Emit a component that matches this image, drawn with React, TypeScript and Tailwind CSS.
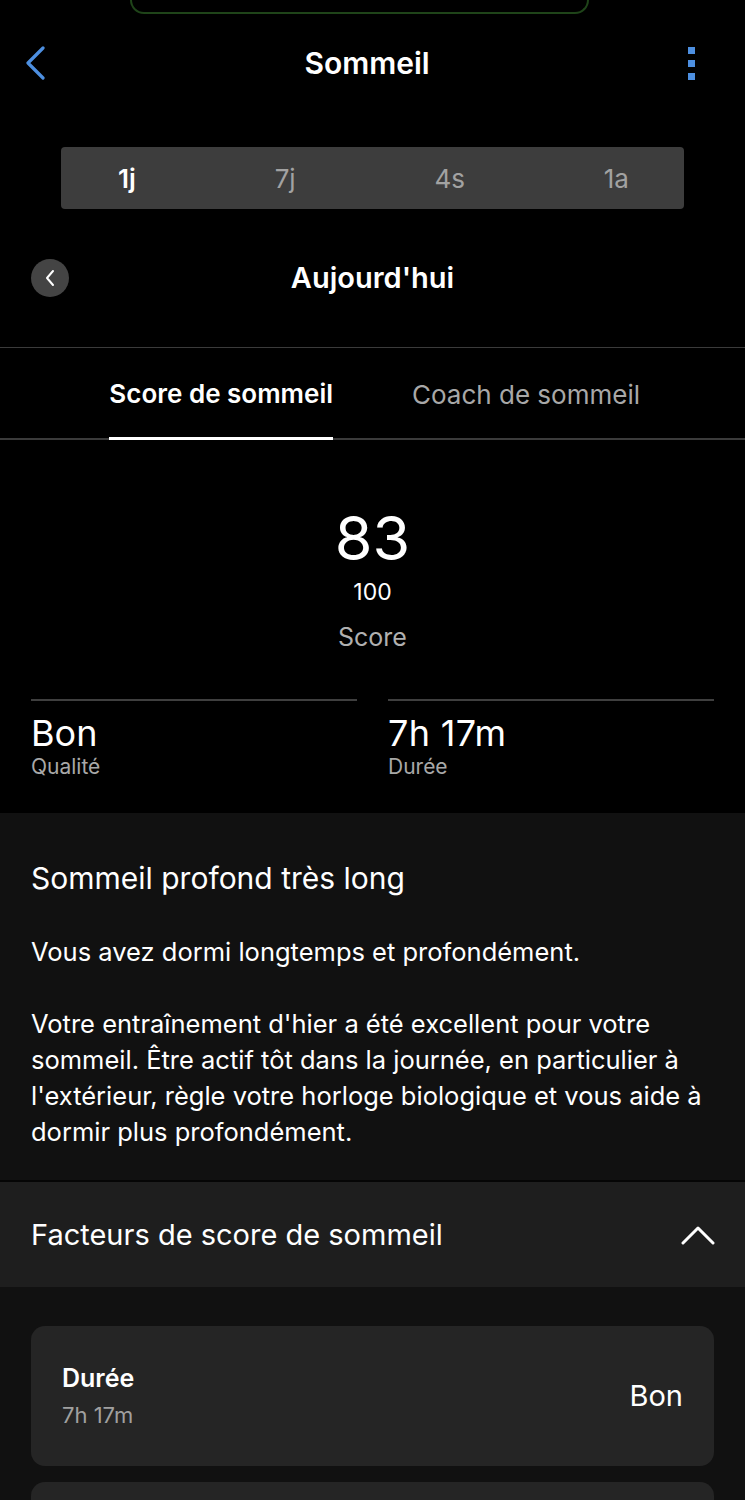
import React from 'react';

const font = { fontFamily: 'Inter, Roboto, "Noto Sans", sans-serif' };

const App: React.FC = () => {
  return (
    <div className="min-h-[1500px] w-[745px] bg-black text-white" style={font}>
      {/* top notch outline */}
      <div className="h-[14px] ml-[130px] w-[459px] border-x-2 border-b-2 border-[#1f4419] rounded-b-[22px]" />

      {/* header */}
      <div className="flex items-center justify-between h-[98px] pl-[24px] pr-[50px]">
        <svg width="22" height="34" viewBox="0 0 22 34" fill="none">
          <path d="M19 2 L4 17 L19 32" stroke="#4d8fe0" strokeWidth="3.2" strokeLinecap="round" strokeLinejoin="round" />
        </svg>
        <h1 className="text-[30px] font-semibold">Sommeil</h1>
        <div className="flex flex-col gap-[6px]">
          <span className="w-[7px] h-[7px] bg-[#4d8fe0] block" />
          <span className="w-[7px] h-[7px] bg-[#4d8fe0] block" />
          <span className="w-[7px] h-[7px] bg-[#4d8fe0] block" />
        </div>
      </div>

      {/* period selector */}
      <div className="pt-[35px] px-[61px]">
        <div className="h-[62px] bg-[#3d3d3d] rounded-[4px] flex items-center justify-between pl-[57px] pr-[55px] text-[26px]">
          <span className="font-semibold text-white">1j</span>
          <span className="text-[#a2a2a2]">7j</span>
          <span className="text-[#a2a2a2]">4s</span>
          <span className="text-[#a2a2a2]">1a</span>
        </div>
      </div>

      {/* date nav */}
      <div className="relative flex items-center justify-center h-[138px]">
        <div className="absolute left-[31px] top-[50px] w-[38px] h-[38px] rounded-full bg-[#444444] flex items-center justify-center">
          <svg width="12" height="18" viewBox="0 0 12 18" fill="none">
            <path d="M9 2 L3 9 L9 16" stroke="#ffffff" strokeWidth="2" strokeLinecap="round" strokeLinejoin="round" />
          </svg>
        </div>
        <h2 className="text-[29px] font-semibold">Aujourd'hui</h2>
      </div>

      {/* tabs */}
      <div className="border-t border-b-2 border-[#3b3b3b] h-[93px] flex">
        <div className="flex-1 flex justify-end pr-[39px]">
          <div className="flex flex-col justify-end">
            <span className="text-[26px] leading-[32px] font-semibold pb-[27px]">Score de sommeil</span>
            <div className="h-[3px] bg-white -mb-[2px]" />
          </div>
        </div>
        <div className="flex-1 flex items-center pl-[40px] pt-[2px]">
          <span className="text-[26px] text-[#a8a8a8]">Coach de sommeil</span>
        </div>
      </div>

      {/* score */}
      <div className="flex flex-col items-center pt-[66px]">
        <span className="text-[61px] leading-[64px]">83</span>
        <span className="text-[23px] leading-[28px] mt-[8px]">100</span>
        <span className="text-[25px] leading-[30px] text-[#b0b0b0] mt-[16px]">Score</span>
      </div>

      <div className="grid grid-cols-2 gap-[31px] px-[31px] pt-[47px] pb-[34px]">
        <div className="border-t-2 border-[#3f3f3f] pt-[10px]">
          <div className="text-[36px] leading-[44px]">Bon</div>
          <div className="text-[21px] leading-[24px] text-[#a8a8a8]">Qualité</div>
        </div>
        <div className="border-t-2 border-[#3f3f3f] pt-[10px]">
          <div className="text-[36px] leading-[44px] tracking-[0.3px]">7h 17m</div>
          <div className="text-[21px] leading-[24px] text-[#a8a8a8]">Durée</div>
        </div>
      </div>

      {/* insight */}
      <div className="bg-[#111111] px-[31px] pt-[45px] pb-[30px] border-b-2 border-[#050505]">
        <h3 className="text-[30px] leading-[40px]">Sommeil profond très long</h3>
        <p className="text-[25.5px] leading-[36px] mt-[36px]">Vous avez dormi longtemps et profondément.</p>
        <p className="text-[25.5px] leading-[36px] mt-[36px] whitespace-nowrap">
          Votre entraînement d'hier a été excellent pour votre
          <br />
          sommeil. Être actif tôt dans la journée, en particulier à
          <br />
          l'extérieur, règle votre horloge biologique et vous aide à
          <br />
          dormir plus profondément.
        </p>
      </div>

      {/* factors header */}
      <div className="bg-[#1e1e1e] h-[105px] flex items-center justify-between pl-[31px] pr-[30px]">
        <span className="text-[29px]">Facteurs de score de sommeil</span>
        <svg width="34" height="20" viewBox="0 0 34 20" fill="none">
          <path d="M2 18 L17 3 L32 18" stroke="#ffffff" strokeWidth="3" strokeLinecap="round" strokeLinejoin="round" />
        </svg>
      </div>

      {/* factor cards */}
      <div className="bg-[#111111] px-[31px] pt-[39px] flex flex-col gap-[16px] pb-[40px]">
        <div className="bg-[#252525] rounded-[14px] h-[140px] flex items-center justify-between pl-[31px] pr-[31px]">
          <div className="flex flex-col">
            <span className="text-[25px] font-semibold leading-[32px]">Durée</span>
            <span className="text-[22px] text-[#a0a0a0] leading-[30px] mt-[6px]">7h 17m</span>
          </div>
          <span className="text-[29px]">Bon</span>
        </div>
        <div className="bg-[#252525] rounded-[14px] h-[140px]" />
      </div>
    </div>
  );
};

export default App;
